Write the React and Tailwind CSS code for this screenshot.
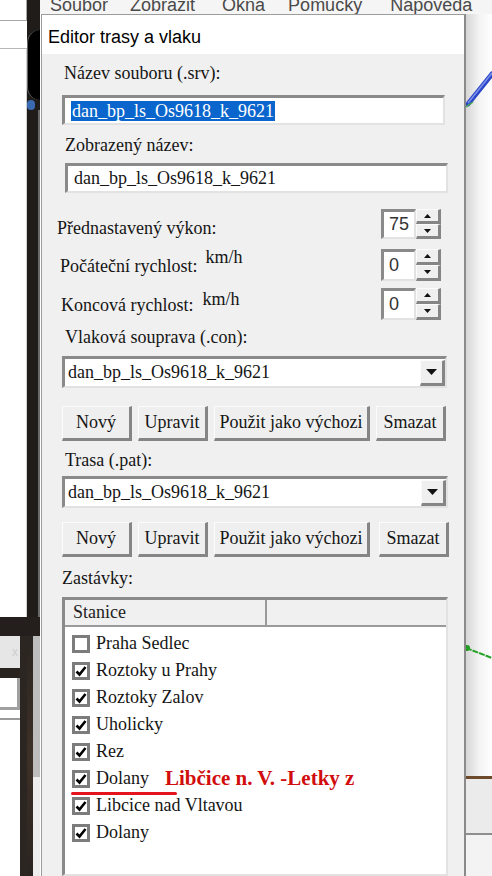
import React from 'react';

const serif = { fontFamily: '"Liberation Serif", "Times New Roman", serif' };
const sans = { fontFamily: '"Liberation Sans", Arial, sans-serif' };

const stops = [
  { name: 'Praha Sedlec', checked: false },
  { name: 'Roztoky u Prahy', checked: true },
  { name: 'Roztoky Zalov', checked: true },
  { name: 'Uholicky', checked: true },
  { name: 'Rez', checked: true },
  { name: 'Dolany', checked: true, note: 'Libčice n. V. -Letky z' },
  { name: 'Libcice nad Vltavou', checked: true },
  { name: 'Dolany', checked: true },
];

const sunken =
  'border-t-[3px] border-l-[3px] border-r-2 border-b-2 border-t-[#8a8a8a] border-l-[#8a8a8a] border-r-[#e2e2e2] border-b-[#e2e2e2] bg-white';
const raised =
  'border-t border-l border-r-[3px] border-b-[3px] border-t-[#fbfbfb] border-l-[#fbfbfb] border-r-[#858585] border-b-[#858585] bg-[#efefef]';

function Label({ children, className = '' }) {
  return (
    <div className={`h-[20px] leading-[20px] text-[18px] text-[#151515] whitespace-nowrap ${className}`} style={serif}>
      {children}
    </div>
  );
}

function Spin({ value, h }) {
  return (
    <div className={`ml-auto flex ${h}`}>
      <div className={`w-[35px] ${sunken} flex items-center pl-[5px] text-[18px] text-[#333]`} style={sans}>
        {value}
      </div>
      <div className="w-[25px] flex flex-col">
        <div className={`flex-1 ${raised} flex items-center justify-center`}>
          <svg width="7" height="4" viewBox="0 0 7 4"><path d="M3.5 0 L7 4 L0 4 Z" fill="#111" /></svg>
        </div>
        <div className={`flex-1 ${raised} flex items-center justify-center`}>
          <svg width="7" height="4" viewBox="0 0 7 4"><path d="M0 0 L7 0 L3.5 4 Z" fill="#111" /></svg>
        </div>
      </div>
    </div>
  );
}

function Combo({ className = '' }) {
  return (
    <div className={`h-[32px] ${sunken} flex items-center ${className}`}>
      <span className="flex-1 pl-[3px] text-[18px] text-[#151515]" style={serif}>
        dan_bp_ls_Os9618_k_9621
      </span>
      <div className={`w-[25px] h-[26px] ${raised} flex items-center justify-center`}>
        <svg width="11" height="6" viewBox="0 0 11 6"><path d="M0 0 L11 0 L5.5 6 Z" fill="#111" /></svg>
      </div>
    </div>
  );
}

function ButtonRow({ className = '', lastGap }) {
  const btn = `h-[35px] ${raised} flex items-center justify-center text-[18px] text-[#151515] whitespace-nowrap`;
  return (
    <div className={`flex ml-[20px] ${className}`} style={serif}>
      <div className={`${btn} w-[70px]`}>Nový</div>
      <div className={`${btn} w-[70px] ml-[6px]`}>Upravit</div>
      <div className={`${btn} w-[156px] ml-[6px]`}>Použit jako výchozi</div>
      <div className={`${btn} w-[70px] ${lastGap}`}>Smazat</div>
    </div>
  );
}

function Check({ checked }) {
  return (
    <div className="w-[18px] h-[18px] border-[3px] border-[#7c7c7c] bg-white flex items-center justify-center">
      {checked && (
        <svg width="12" height="12" viewBox="0 0 12 12">
          <path d="M1.5 6.5 L4.5 9.5 L10.5 2" fill="none" stroke="#000" strokeWidth="2.6" />
        </svg>
      )}
    </div>
  );
}

export default function App() {
  return (
    <div className="w-[492px] h-[876px] overflow-hidden flex bg-white">
      {/* window behind: white panel */}
      <div className="w-[27px] shrink-0 flex flex-col bg-white">
        <div className="h-[21px] shrink-0 border-r border-b border-[#a8a8a8]" />
        <div className="h-[27px] shrink-0" />
        <div className="h-px shrink-0 bg-[#b8b8b8]" />
        <div className="h-[568px] shrink-0 border-r border-[#d0d0d0]" />
        <div className="h-[19px] shrink-0 bg-[#241f1c]" />
        <div className="h-[240px] shrink-0 flex">
          <div className="w-[20px] shrink-0 flex flex-col">
            <div className="h-[32px] bg-[#e6e6e6] flex items-center justify-end pr-[2px] text-[12px] text-[#cfcfcf]" style={sans}>
              x
            </div>
            <div className="h-[10px] bg-[#29231f]" />
            <div className="h-[32px] bg-white border-r-[3px] border-b-[3px] border-[#a0a0a0]" />
            <div className="h-[8px] bg-white" />
            <div className="h-[2px] bg-[#9a9a9a]" />
            <div className="h-[156px] w-[17px] bg-white" />
          </div>
          <div className="w-[7px] shrink-0 bg-[#2c2622]" />
        </div>
      </div>

      {/* dark desktop strip */}
      <div className="w-[13px] shrink-0 flex flex-col bg-[#1f1c1a]">
        <div className="h-[30px] shrink-0" />
        <div className="h-[70px] shrink-0 rounded-l-full bg-black border-l border-[#666]" />
        <div className="h-[10px] w-[8px] shrink-0 bg-[#3a6ab0] rounded-sm" />
        <div className="h-[507px] shrink-0 border-r-2 border-[#6a6a6a]" />
        <div className="h-[19px] shrink-0 bg-[#241f1c]" />
        <div className="h-[240px] shrink-0 flex">
          <div className="w-[6px] shrink-0 bg-gradient-to-b from-[#2a2521] via-[#3d3027] to-[#2a2420]" />
          <div className="w-[7px] shrink-0 flex flex-col">
            <div className="h-[141px] bg-[#bdbdbd]" />
            <div className="h-[99px] bg-[#ededed]" />
          </div>
        </div>
      </div>

      <div className="w-[452px] shrink-0 flex flex-col">
        {/* menu bar of the main window */}
        <div className="h-[14px] overflow-hidden bg-[#f5f5f5]">
          <div className="flex mt-[-5px] h-[20px] leading-[20px] text-[18px] text-[#4a4a4a] whitespace-nowrap" style={sans}>
            <span className="ml-[10px]">Soubor</span>
            <span className="ml-[22px]">Zobrazit</span>
            <span className="ml-[27px]">Okna</span>
            <span className="ml-[23px]">Pomůcky</span>
            <span className="ml-[28px]">Nápověda</span>
          </div>
        </div>

        <div className="flex-1 flex">
          {/* dialog */}
          <div className="ml-px w-[425px] shrink-0 flex flex-col border-l border-t border-r-2 border-[#9c9c9c] border-r-[#8a8a8a]">
            <div className="h-[39px] bg-white pl-[6px] pt-[10px] text-[18px] leading-[24px] text-black" style={sans}>
              Editor trasy a vlaku
            </div>
            <div className="flex-1 bg-[#f0f0f0] flex flex-col">
              <Label className="ml-[22px] mt-[9px]">Název souboru (.srv):</Label>
              <div className={`ml-[20px] mt-[12px] w-[383px] h-[30px] ${sunken} flex items-center pl-[6px]`}>
                <span className="bg-[#0a66cc] text-white text-[18px] leading-[20px] px-[1px]" style={serif}>
                  dan_bp_ls_Os9618_k_9621
                </span>
              </div>

              <Label className="ml-[23px] mt-[10px]">Zobrazený název:</Label>
              <div className={`ml-[23px] mt-[8px] w-[383px] h-[30px] ${sunken} flex items-center pl-[6px] text-[18px] text-[#151515]`} style={serif}>
                dan_bp_ls_Os9618_k_9621
              </div>

              <div className="mt-[16px] h-[30px] w-[399px] pl-[15px] flex items-center">
                <Label className="mt-[8px]">Přednastavený výkon:</Label>
                <Spin value="75" h="h-[30px]" />
              </div>
              <div className="mt-[10px] h-[32px] w-[399px] pl-[18px] flex items-center">
                <Label className="mt-[2px]">Počáteční rychlost:</Label>
                <span className="ml-[8px] mb-[16px] leading-[20px] text-[18px] text-[#151515]" style={serif}>km/h</span>
                <Spin value="0" h="h-[32px]" />
              </div>
              <div className="mt-[7px] h-[32px] w-[399px] pl-[19px] flex items-center">
                <Label className="mt-[2px]">Koncová rychlost:</Label>
                <span className="ml-[9px] mb-[10px] leading-[20px] text-[18px] text-[#151515]" style={serif}>km/h</span>
                <Spin value="0" h="h-[32px]" />
              </div>

              <Label className="ml-[23px] mt-[7px]">Vlaková souprava (.con):</Label>
              <Combo className="ml-[20px] mt-[9px] w-[385px]" />
              <ButtonRow className="mt-[18px]" lastGap="ml-[6px]" />

              <Label className="ml-[23px] mt-[9px]">Trasa (.pat):</Label>
              <Combo className="ml-[20px] mt-[6px] w-[386px]" />
              <ButtonRow className="mt-[14px]" lastGap="ml-[9px]" />

              <Label className="ml-[20px] mt-[11px]">Zastávky:</Label>
              <div className={`ml-[20px] mt-[9px] w-[386px] flex-1 ${sunken} flex flex-col`}>
                <div className="h-[27px] flex bg-[#f0f0f0] border-b-2 border-[#9a9a9a] text-[18px] text-[#222]" style={serif}>
                  <div className="w-[202px] border-r-2 border-[#9a9a9a] pl-[8px] flex items-center">Stanice</div>
                  <div className="flex-1" />
                </div>
                <div className="pt-[3px] flex flex-col">
                  {stops.map((s, i) => (
                    <div key={i} className="relative h-[27px] flex items-center pl-[7px] whitespace-nowrap">
                      <Check checked={s.checked} />
                      <span className="ml-[6px] text-[18px] text-[#151515]" style={serif}>{s.name}</span>
                      {s.note && (
                        <>
                          <span className="ml-[16px] text-[21px] font-bold text-[#d10d0d]" style={serif}>{s.note}</span>
                          <div className="absolute left-[6px] top-[27px] w-[106px] h-[3px] rounded-full bg-[#e5141c]" />
                        </>
                      )}
                    </div>
                  ))}
                </div>
              </div>
            </div>
          </div>

          {/* map canvas visible beside the dialog */}
          <div className="w-[26px] shrink-0 bg-gradient-to-r from-[#d6d6d6] via-[#f3f3f3] to-white">
            <svg width="26" height="862" viewBox="0 0 26 862">
              <path d="M2 90 L26 60" stroke="#2a44c8" strokeWidth="5" strokeLinecap="round" />
              <path d="M2 89 L26 59" stroke="#7d95ea" strokeWidth="1.5" />
              <path d="M0 93 L7 88" stroke="#4caf50" strokeWidth="1.5" />
              <circle cx="1" cy="634" r="3" fill="#1f9a1f" />
              <path d="M0 634 L26 644" stroke="#27a227" strokeWidth="2" strokeDasharray="6 1" />
              <rect x="0" y="765" width="26" height="55" fill="#ebebeb" />
              <rect x="0" y="762" width="26" height="3" fill="#6e4a2c" />
              <rect x="0" y="819" width="26" height="2" fill="#8e8e8e" />
              <rect x="0" y="821" width="26" height="41" fill="#f3f3f3" />
            </svg>
          </div>
        </div>
      </div>
    </div>
  );
}
